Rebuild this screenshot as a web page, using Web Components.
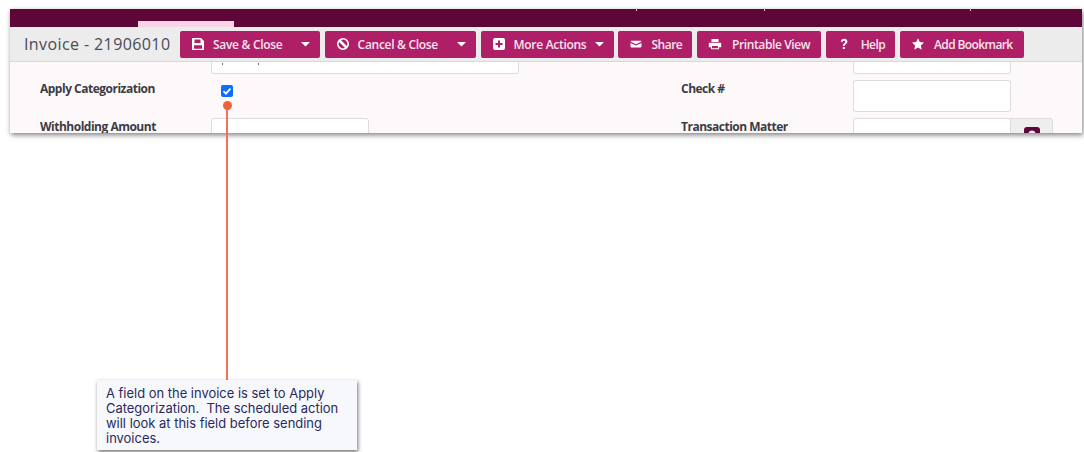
<!DOCTYPE html>
<html>
<head>
<meta charset="utf-8">
<title>Invoice</title>
<style>
  html, body { margin: 0; background: #fff; }
  body { width: 1084px; height: 452px; overflow: hidden; position: relative; }
</style>
</head>
<body>
<app-window>
  <span slot="title">Invoice - 21906010</span>
  <tool-button slot="actions" icon="save" w="140" caret>Save &amp; Close</tool-button>
  <tool-button slot="actions" icon="ban" w="151.400" caret>Cancel &amp; Close</tool-button>
  <tool-button slot="actions" icon="plus" w="133.300" caret>More Actions</tool-button>
  <tool-button slot="actions" icon="mail" w="74" style="letter-spacing:-.5px">Share</tool-button>
  <tool-button slot="actions" icon="print" w="124" gap="10" style="letter-spacing:-.4px">Printable View</tool-button>
  <tool-button slot="actions" icon="help" w="69.700" gap="10" style="letter-spacing:-.6px">Help</tool-button>
  <tool-button slot="actions" icon="star" w="124" gap="9" style="letter-spacing:-.6px">Add Bookmark</tool-button>
  <invoice-form>
    <span></span><text-box w="308" tails></text-box>
    <span></span><text-box w="158"></text-box>

    <form-label>Apply Categorization</form-label><check-box></check-box>
    <form-label>Check #</form-label><text-box w="158"></text-box>

    <form-label>Withholding Amount</form-label><text-box w="158"></text-box>
    <form-label>Transaction Matter</form-label><text-box w="158" lookup></text-box>
  </invoice-form>
</app-window>
<call-out>A field on the invoice is set to Apply Categorization.&nbsp; The scheduled action will look at this field before sending invoices.</call-out>

<script>
const ICONS = {
  save: '<path fill-rule="evenodd" d="M1 1h9l3 3v9H1zM3.500 2.500v3.500h6V2.500zM3 8.200v3.500h8V8.200z"/>',
  ban: '<path fill-rule="evenodd" d="M7 1a6 6 0 1 0 0 12A6 6 0 0 0 7 1zM3.200 5.100l5.700 5.700A4.200 4.200 0 0 1 3.200 5.100zM5.100 3.200a4.200 4.200 0 0 1 5.700 5.700z"/>',
  plus: '<path fill-rule="evenodd" d="M3 1h8a2 2 0 0 1 2 2v8a2 2 0 0 1-2 2H3a2 2 0 0 1-2-2V3a2 2 0 0 1 2-2zM6 3.500v2.500H3.500v2H6v2.500h2V8h2.500V6H8V3.500z"/>',
  mail: '<path d="M1.500 4.500c0-.4.4-.8.8-.8h9.400c.4 0 .8.4.8.8L7 7.200zM1.500 5.900L7 8.500l5.500-2.600v3.700c0 .4-.4.8-.8.8H2.300c-.4 0-.8-.4-.8-.8z"/>',
  print: '<path fill-rule="evenodd" d="M3.500 2h7v3h-7zM1.800 5.800h10.400c.6 0 1 .4 1 1v3.400h-2.200v2h-8v-2H.8V6.800c0-.6.4-1 1-1zM4 9v2.200h6V9z"/>',
  help: '<path d="M3.800 4.600C4 2.800 5.300 1.800 7.100 1.800c1.900 0 3.300 1.100 3.300 2.800 0 1.300-.7 2-1.600 2.600-.7.500-1 .8-1 1.500v.3H5.900v-.5c0-1.100.4-1.700 1.300-2.300.7-.5 1.100-.8 1.100-1.400 0-.6-.5-1-1.200-1-.8 0-1.300.5-1.400 1.300zM5.800 10h2.100v2.100H5.800z"/>',
  star: '<path d="M7 1.200l1.800 3.900 4.200.5-3.100 2.900.8 4.200L7 10.600l-3.700 2.100.8-4.200L1 5.600l4.200-.5z"/>'
};

class AppWindow extends HTMLElement {
  constructor() {
    super();
    this.attachShadow({ mode: 'open' }).innerHTML = `
      <style>
        :host {
          display: flex;
          flex-direction: column;
          width: 1072px;
          height: 124px;
          margin: 9px 0 0 10px;
          background: #fdf8fa;
          box-shadow: 1px 2px 5px rgba(0, 0, 0, 0.5);
          font-family: "Open Sans", sans-serif;
        }
        .top {
          flex: none;
          height: 18px;
          display: flex;
          align-items: flex-end;
          padding-left: 128px;
          background: #5e0638;
          position: relative;
        }
        .tab { width: 96px; height: 6px; background: #fbd3e6; }
        /* tails of the clipped nav text above the bar */
        .tail { position: absolute; top: -1px; width: 1px; height: 3px; background: #d9c3cf; }
        .bar {
          flex: none;
          height: 34px;
          display: flex;
          align-items: center;
          padding-left: 14px;
          background: #ececec;
          border-bottom: 1px solid #d9d9d9;
        }
        .title {
          width: 156px;
          font-size: 16px;
          letter-spacing: 0.4px;
          color: #4a4a55;
          white-space: nowrap;
        }
        .actions { display: flex; gap: 4.600px; }
        .body { flex: 1; min-height: 0; overflow: hidden; }
      </style>
      <div class="top">
        <div class="tab"></div>
        <i class="tail" style="left:626px"></i>
        <i class="tail" style="left:754px"></i>
        <i class="tail" style="left:960px"></i>
      </div>
      <div class="bar">
        <div class="title"><slot name="title"></slot></div>
        <div class="actions"><slot name="actions"></slot></div>
      </div>
      <div class="body"><slot></slot></div>
    `;
  }
}

class ToolButton extends HTMLElement {
  constructor() {
    super();
    const caretHtml = this.hasAttribute('caret')
      ? `<svg class="caret" width="9" height="5" viewBox="0 0 9 5"><path d="M0 0h9L4.500 4.500z"/></svg>`
      : '';
    this.attachShadow({ mode: 'open' }).innerHTML = `
      <style>
        :host {
          display: flex;
          align-items: center;
          width: ${this.getAttribute('w')}px;
          height: 27px;
          padding: 0 10px 0 11px;
          box-sizing: border-box;
          background: #ae1f68;
          border-radius: 2px;
          color: #f7e4ee;
          font-size: 12px;
          font-weight: 600;
          letter-spacing: -0.3px;
          white-space: nowrap;
        }
        svg { flex: none; fill: #fff; }
        .icon { margin-right: ${this.getAttribute('gap') || 8}px; }
        .caret { margin-left: auto; }
      </style>
      <svg class="icon" width="14" height="14" viewBox="0 0 14 14">${ICONS[this.getAttribute('icon')]}</svg>
      <slot></slot>${caretHtml}
    `;
  }
}

class InvoiceForm extends HTMLElement {
  constructor() {
    super();
    this.attachShadow({ mode: 'open' }).innerHTML = `
      <style>
        :host {
          display: grid;
          grid-template-columns: 171px 470px 172px 1fr;
          grid-auto-rows: 32px;
          row-gap: 6px;
          margin-top: -20px;
          padding-left: 30px;
        }
      </style>
      <slot></slot>
    `;
  }
}

class FormLabel extends HTMLElement {
  constructor() {
    super();
    this.attachShadow({ mode: 'open' }).innerHTML = `
      <style>
        :host {
          display: block;
          line-height: 18px;
          font-size: 12px;
          font-weight: 700;
          letter-spacing: -0.5px;
          color: #3c3c44;
          white-space: nowrap;
        }
      </style>
      <slot></slot>
    `;
  }
}

class TextBox extends HTMLElement {
  constructor() {
    super();
    const addon = this.hasAttribute('lookup')
      ? `<div class="addon"><svg width="16" height="16" viewBox="0 0 16 16"><path fill="#5e0638" fill-rule="evenodd" d="M3 0h10a3 3 0 0 1 3 3v10a3 3 0 0 1-3 3H3a3 3 0 0 1-3-3V3a3 3 0 0 1 3-3zM8 3.500a3.500 3.500 0 1 0 0 7 3.500 3.500 0 0 0 0-7z"/></svg></div>`
      : '';
    // the value of this field is scrolled away, only the ends of its brackets still show
    const tails = this.hasAttribute('tails') ? '<div class="tails"><i></i><i></i></div>' : '';
    this.attachShadow({ mode: 'open' }).innerHTML = `
      <style>
        :host { display: flex; height: 32px; }
        .box {
          width: ${this.getAttribute('w')}px;
          box-sizing: border-box;
          padding: 20px 0 0 10px;
          background: #fff;
          border: 1px solid #dcdcdc;
          border-radius: 3px;
        }
        .tails { display: flex; justify-content: space-between; width: 37px; }
        .tails i { width: 1px; height: 2px; background: #77777f; }
        .addon {
          width: 43px;
          margin-left: -1px;
          box-sizing: border-box;
          display: flex;
          justify-content: center;
          padding-top: 8px;
          background: #eeeeee;
          border: 1px solid #dcdcdc;
          border-radius: 0 3px 3px 0;
        }
      </style>
      <div class="box">${tails}</div>${addon}
    `;
  }
}

class CheckBox extends HTMLElement {
  constructor() {
    super();
    this.attachShadow({ mode: 'open' }).innerHTML = `
      <style>
        :host { display: block; padding: 5px 0 0 10px; }
        .tick {
          display: flex;
          align-items: center;
          justify-content: center;
          width: 12px;
          height: 12px;
          background: #0d6efd;
          border-radius: 2px;
        }
      </style>
      <div class="tick" role="checkbox" aria-checked="true">
        <svg width="10" height="10" viewBox="0 0 10 10"><path fill="none" stroke="#fff" stroke-width="1.800" d="M1.500 5.200l2.400 2.400 4.600-5"/></svg>
      </div>
    `;
  }
}

class CallOut extends HTMLElement {
  constructor() {
    super();
    this.attachShadow({ mode: 'open' }).innerHTML = `
      <style>
        :host { display: contents; }
        .line { position: absolute; left: 226px; top: 105px; width: 1.500px; height: 275px; background: #f0735a; }
        .dot { position: absolute; left: 223px; top: 101px; width: 9px; height: 9px; border-radius: 50%; background: #f0603c; }
        .note {
          position: absolute;
          left: 97px;
          top: 380px;
          width: 260px;
          height: 70px;
          box-sizing: border-box;
          padding: 6px 10px 0 9px;
          background: #f6f8fc;
          box-shadow: 1px 2px 4px rgba(0, 0, 0, 0.55);
          font-family: Inter, sans-serif;
          font-size: 12.950px;
          line-height: 15px;
          color: #2a2a5c;
        }
      </style>
      <div class="line"></div>
      <div class="dot"></div>
      <div class="note"><slot></slot></div>
    `;
  }
}

customElements.define('app-window', AppWindow);
customElements.define('tool-button', ToolButton);
customElements.define('invoice-form', InvoiceForm);
customElements.define('form-label', FormLabel);
customElements.define('text-box', TextBox);
customElements.define('check-box', CheckBox);
customElements.define('call-out', CallOut);
</script>
</body>
</html>
